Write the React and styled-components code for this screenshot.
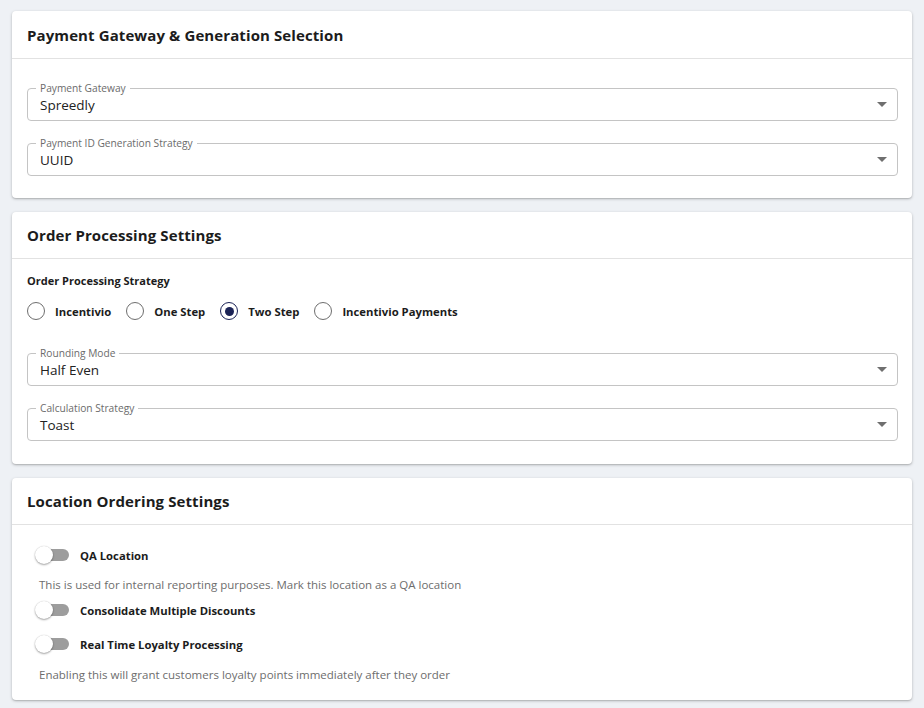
import React from "react";
import styled, { createGlobalStyle } from "styled-components";

const Global = createGlobalStyle`
  html, body { margin: 0; padding: 0; background: #eef1f5; }
  body { font-family: "Open Sans", "Noto Sans", sans-serif; color: #1f1f1f; }
  * { box-sizing: border-box; }
`;

const Page = styled.div`
  display: flex;
  flex-direction: column;
  gap: 14px;
  padding: 11px 12px 8px 12px;
`;

const Card = styled.section`
  background: #fff;
  border-radius: 4px;
  box-shadow: 0 1px 3px rgba(0,0,0,0.25), 0 1px 1px rgba(0,0,0,0.08);
`;

const CardHeader = styled.div`
  height: ${p => p.$h || 47}px;
  display: flex;
  align-items: center;
  padding: 0 15px;
  border-bottom: 1px solid #e2e2e2;
  font-size: 15px;
  font-weight: 700;
  color: #1c1c1c;
  letter-spacing: 0.1px;
`;

const CardBody = styled.div`
  display: flex;
  flex-direction: column;
  padding: ${p => p.$pad || "29px 14px 22px 15px"};
  gap: 22px;
`;

const Field = styled.div`
  position: relative;
  padding: 0 10px 0 12px;
  height: 33px;
  border: 1px solid #c4c4c4;
  border-radius: 4px;
  display: flex;
  align-items: center;
`;

const Legend = styled.span`
  position: absolute;
  top: -7px;
  left: 8px;
  padding: 0 4px;
  background: #fff;
  font-size: 10.2px;
  line-height: 12px;
  color: #6b6b6b;
`;

const Value = styled.span`
  font-size: 13.5px;
  color: #222;
  padding-top: 1px;
`;

const Caret = styled.span`
  margin-left: auto;
  width: 0;
  height: 0;
  border-left: 5px solid transparent;
  border-right: 5px solid transparent;
  border-top: 5px solid #6f6f6f;
`;

const SelectField = ({ label, value }) => (
  <Field>
    <Legend>{label}</Legend>
    <Value>{value}</Value>
    <Caret />
  </Field>
);

const GroupLabel = styled.div`
  font-size: 11px;
  font-weight: 700;
  color: #1c1c1c;
`;

const RadioRow = styled.div`
  display: flex;
  align-items: center;
  gap: 15px;
  margin-top: 14px;
  margin-bottom: 11px;
`;

const RadioItem = styled.label`
  display: flex;
  align-items: center;
  gap: 10px;
  font-size: 11.3px;
  font-weight: 700;
  color: #1c1c1c;
`;

const RadioCircle = styled.span`
  width: 18px;
  height: 18px;
  border-radius: 50%;
  border: 1.6px solid ${p => (p.$checked ? "#1b2356" : "#6e6e6e")};
  display: flex;
  align-items: center;
  justify-content: center;
  &::after {
    content: "";
    width: 9px;
    height: 9px;
    border-radius: 50%;
    background: ${p => (p.$checked ? "#1b2356" : "transparent")};
  }
`;

const ToggleRow = styled.div`
  display: flex;
  align-items: center;
  gap: 11px;
  height: 20px;
  padding-left: 26px;
`;

const Track = styled.span`
  position: relative;
  width: 31px;
  height: 12px;
  border-radius: 6px;
  background: #9d9d9d;
  flex: none;
`;

const Thumb = styled.span`
  position: absolute;
  left: -3px;
  top: -3px;
  width: 18px;
  height: 18px;
  border-radius: 50%;
  background: #fff;
  box-shadow: 0 1px 2px rgba(0,0,0,0.35), 0 0 1px rgba(0,0,0,0.2);
`;

const ToggleLabel = styled.span`
  font-size: 11.3px;
  font-weight: 700;
  color: #1c1c1c;
`;

const Helper = styled.div`
  font-size: 11.5px;
  line-height: 15px;
  color: #6d6d6d;
  padding-left: 27px;
`;

const Toggle = ({ label }) => (
  <ToggleRow>
    <Track>
      <Thumb />
    </Track>
    <ToggleLabel>{label}</ToggleLabel>
  </ToggleRow>
);

const ToggleList = styled.div`
  display: flex;
  flex-direction: column;
  padding: 20px 0 18px;
`;

const Spacer = styled.div`
  height: ${p => p.$h}px;
`;

export default function App() {
  const radios = ["Incentivio", "One Step", "Two Step", "Incentivio Payments"];
  return (
    <Page>
      <Global />
      <Card>
        <CardHeader $h={48}>Payment Gateway &amp; Generation Selection</CardHeader>
        <CardBody>
          <SelectField label="Payment Gateway" value="Spreedly" />
          <SelectField label="Payment ID Generation Strategy" value="UUID" />
        </CardBody>
      </Card>
      <Card>
        <CardHeader>Order Processing Settings</CardHeader>
        <CardBody $pad="14px 14px 23px 15px">
          <div>
            <GroupLabel>Order Processing Strategy</GroupLabel>
            <RadioRow>
              {radios.map(r => (
                <RadioItem key={r}>
                  <RadioCircle $checked={r === "Two Step"} />
                  {r}
                </RadioItem>
              ))}
            </RadioRow>
          </div>
          <SelectField label="Rounding Mode" value="Half Even" />
          <SelectField label="Calculation Strategy" value="Toast" />
        </CardBody>
      </Card>
      <Card>
        <CardHeader>Location Ordering Settings</CardHeader>
        <ToggleList>
          <Toggle label="QA Location" />
          <Spacer $h={12} />
          <Helper>This is used for internal reporting purposes. Mark this location as a QA location</Helper>
          <Spacer $h={8} />
          <Toggle label="Consolidate Multiple Discounts" />
          <Spacer $h={14} />
          <Toggle label="Real Time Loyalty Processing" />
          <Spacer $h={13} />
          <Helper>Enabling this will grant customers loyalty points immediately after they order</Helper>
        </ToggleList>
      </Card>
    </Page>
  );
}
